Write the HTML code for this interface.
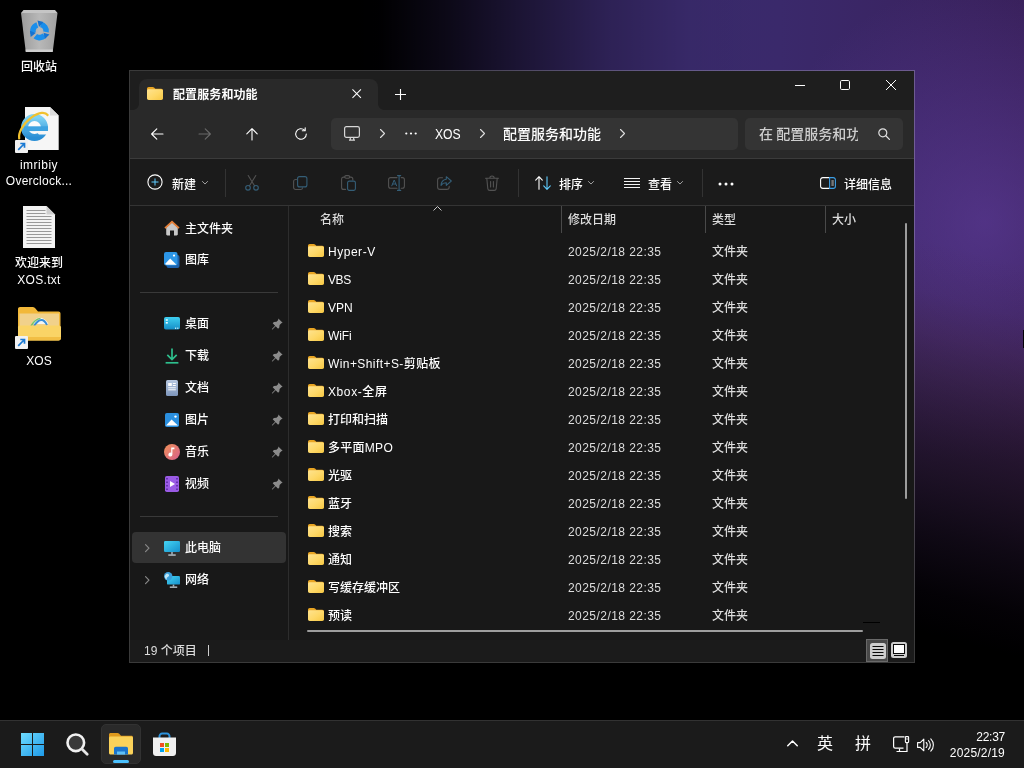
<!DOCTYPE html>
<html lang="zh-CN">
<head>
<meta charset="utf-8">
<title>配置服务和功能</title>
<style>
*{box-sizing:border-box;margin:0;padding:0}
html,body{width:1024px;height:768px;overflow:hidden;background:#000}
body{font-family:"Liberation Sans","Noto Sans CJK SC",sans-serif;font-size:12px;color:#fff;position:relative}
div,svg,span{position:absolute}
svg{overflow:visible}
#root{left:0;top:0;width:1024px;height:768px;will-change:transform;opacity:.999}
#wall{left:0;top:0;width:1024px;height:720px;background:#000;overflow:hidden}
#wall .g1{left:0;top:0;width:1024px;height:720px;
 background:
  linear-gradient(to right, #000 0px, #000 340px, rgba(0,0,0,.975) 380px, rgba(0,0,0,.77) 450px, rgba(0,0,0,.51) 520px, rgba(0,0,0,.2) 610px, rgba(0,0,0,.03) 690px, rgba(0,0,0,0) 760px),
  linear-gradient(195deg, rgba(60,30,40,0) 0%, rgba(60,30,40,0) 26.5%, rgba(60,30,40,.08) 31.9%, rgba(55,28,35,.24) 35.9%, rgba(40,22,25,.38) 39.9%, rgba(28,15,18,.50) 44%, rgba(17,10,12,.68) 50%, rgba(8,5,7,.83) 56%, rgba(2,1,2,.95) 62.1%, rgba(0,0,0,1) 67.1%),
  radial-gradient(ellipse 230px 240px at 985px 222px, rgba(104,68,170,.52), rgba(104,68,170,0) 100%),
  linear-gradient(to right, #3a2b6c 0px, #3a2b6c 690px, #3b2a6c 780px, #3b2563 920px, #39215b 1024px);}
.dl{width:90px;text-align:center;font-size:12px;line-height:17px;color:#fff;font-weight:500;text-shadow:0 1px 2px rgba(0,0,0,.9);white-space:nowrap}
#taskbar{left:0;top:720px;width:1024px;height:48px;background:#1c1c1c;border-top:1px solid #333}
#winbg{left:130px;top:71px;width:784px;height:591px;background:#191919}
#winborder{left:129px;top:70px;width:786px;height:593px;border:1px solid rgba(255,255,255,.23)}
#titlebar{left:130px;top:71px;width:784px;height:39px;background:#1f1f1f}
#tab{left:139px;top:79px;width:239px;height:31px;background:#2a2a2a;border-radius:8px 8px 0 0}
#navbar{left:130px;top:110px;width:784px;height:48px;background:#2a2a2a}
#navline{left:130px;top:158px;width:784px;height:1px;background:#3c3c3c}
#toolbar{left:130px;top:159px;width:784px;height:46px;background:#1c1c1c}
#toolline{left:130px;top:205px;width:784px;height:1px;background:#353535}
#addr{left:331px;top:118px;width:407px;height:32px;background:#353535;border-radius:5px}
#search{left:745px;top:118px;width:158px;height:32px;background:#353535;border-radius:5px}
#sideline{left:288px;top:206px;width:1px;height:434px;background:#2e2e2e}
.t{white-space:nowrap;line-height:16px;height:16px;font-size:12px;color:#fff;font-weight:500}
.t14{white-space:nowrap;line-height:20px;height:20px;font-size:14px;color:#fff;font-weight:500}
.g{color:#dedede}
.sep{width:1px;background:#343434}
</style>
</head>
<body>
<div id="root">
<div id="wall"><div class="g1"></div><div style="left:1023px;top:330px;width:1px;height:18px;background:#050008"></div></div>
<div id="winbg"></div>
<div id="titlebar"></div>
<div id="tab"></div>
<div style="left:133px;top:104px;width:6px;height:6px;background:radial-gradient(circle at 0 0, rgba(42,42,42,0) 5.500px, #2a2a2a 6.200px)"></div>
<div style="left:378px;top:104px;width:6px;height:6px;background:radial-gradient(circle at 100% 0, rgba(42,42,42,0) 5.500px, #2a2a2a 6.200px)"></div>
<div id="navbar"></div>
<div id="navline"></div>
<div id="addr"></div>
<div id="search"></div>
<div id="toolbar"></div>
<div id="toolline"></div>
<div id="sideline"></div>
<div style="left:130px;top:640px;width:784px;height:22px;background:#1c1c1c"></div>
<svg style="left:0;top:0" width="0" height="0"><defs><linearGradient id="fg" x1="0" y1="0" x2="1" y2="1"><stop offset="0" stop-color="#ffe491"/><stop offset=".55" stop-color="#ffd968"/><stop offset="1" stop-color="#f7c845"/></linearGradient></defs></svg>
<svg style="left:147px;top:87px" width="16" height="13" viewBox="0 0 17 14" preserveAspectRatio="none"><path d="M1.800 0h4.200c.6 0 1.100.2 1.500.6l1.300 1.400h6.400c1 0 1.800.8 1.800 1.800v1.600H0V1.800C0 .8.800 0 1.800 0z" fill="#eaa624"/><path d="M0 4c0-.9.700-1.600 1.600-1.600h13.600c1 0 1.800.8 1.800 1.800v8c0 1-.8 1.800-1.800 1.800H1.800c-1 0-1.800-.8-1.800-1.800z" fill="url(#fg)"/></svg>
<div class="t" style="left:173px;top:87px;font-weight:bold;letter-spacing:0.1px">配置服务和功能</div>
<svg style="left:352px;top:89px" width="9.400" height="9.400" viewBox="0 0 10 10"><path d="M.5.5l9 9M9.500 .5l-9 9" stroke="#fff" stroke-width="1.1" fill="none"/></svg>
<svg style="left:395px;top:89px" width="11" height="11" viewBox="0 0 11 11"><path d="M5.500 0v11M0 5.500h11" stroke="#fff" stroke-width="1.1" fill="none"/></svg>
<svg style="left:795px;top:85px" width="10" height="1" viewBox="0 0 10 1"><rect width="10" height="1" fill="#fff"/></svg>
<svg style="left:840px;top:80px" width="10" height="10" viewBox="0 0 10 10"><rect x=".5" y=".5" width="9" height="9" rx="1.2" stroke="#fff" stroke-width="1" fill="none"/></svg>
<svg style="left:886px;top:80px" width="10" height="10" viewBox="0 0 10 10"><path d="M0 0l10 10M10 0L0 10" stroke="#fff" stroke-width="1" fill="none"/></svg>
<svg style="left:151px;top:128px" width="12" height="12" viewBox="0 0 12 12"><path d="M12 6H.8M5.800 .8L.6 6l5.200 5.200" stroke="#fff" stroke-width="1.1" fill="none" stroke-linecap="round" stroke-linejoin="round"/></svg>
<svg style="left:199px;top:128px" width="12" height="12" viewBox="0 0 12 12"><path d="M0 6h11.200M6.200 .8L11.400 6l-5.200 5.200" stroke="#6a6a6a" stroke-width="1.1" fill="none" stroke-linecap="round" stroke-linejoin="round"/></svg>
<svg style="left:246px;top:128px" width="12" height="12" viewBox="0 0 12 12"><path d="M6 12V.8M.8 5.800L6 .6l5.200 5.200" stroke="#fff" stroke-width="1.1" fill="none" stroke-linecap="round" stroke-linejoin="round"/></svg>
<svg style="left:294px;top:127px" width="14" height="14" viewBox="0 0 14 14"><path d="M12.300 7a5.300 5.300 0 1 1-1.700-3.900" stroke="#fff" stroke-width="1.1" fill="none" stroke-linecap="round"/><path d="M11.200 .8v2.900H8.300" stroke="#fff" stroke-width="1.1" fill="none" stroke-linecap="round" stroke-linejoin="round"/></svg>
<svg style="left:344px;top:126px" width="16" height="15" viewBox="0 0 16 15"><rect x=".6" y=".6" width="14.800" height="10.800" rx="1.800" stroke="#d8d8d8" stroke-width="1.200" fill="none"/><path d="M5 14.200h6M6.300 11.600v2.400M9.700 11.600v2.400" stroke="#d8d8d8" stroke-width="1.200" fill="none"/></svg>
<svg style="left:380px;top:129px" width="5" height="9" viewBox="0 0 5 9"><path d="M.5.5l4 4-4 4" stroke="#e0e0e0" stroke-width="1.100" fill="none" stroke-linecap="round" stroke-linejoin="round"/></svg>
<svg style="left:405px;top:132px" width="12" height="3" viewBox="0 0 12 3"><circle cx="1.300" cy="1.500" r="1.100" fill="#fff"/><circle cx="6" cy="1.500" r="1.100" fill="#fff"/><circle cx="10.700" cy="1.500" r="1.100" fill="#fff"/></svg>
<div class="t14" style="left:435px;top:124px;transform:scaleX(.87);transform-origin:0 0">XOS</div>
<svg style="left:480px;top:129px" width="5" height="9" viewBox="0 0 5 9"><path d="M.5.5l4 4-4 4" stroke="#e0e0e0" stroke-width="1.100" fill="none" stroke-linecap="round" stroke-linejoin="round"/></svg>
<div class="t14" style="left:503px;top:124px">配置服务和功能</div>
<svg style="left:620px;top:129px" width="5" height="9" viewBox="0 0 5 9"><path d="M.5.5l4 4-4 4" stroke="#e0e0e0" stroke-width="1.100" fill="none" stroke-linecap="round" stroke-linejoin="round"/></svg>
<div class="t14" style="left:759px;top:124px;color:#cfcfcf;width:98.500px;overflow:hidden;word-spacing:-.600px">在 配置服务和功能 中搜索</div>
<svg style="left:878px;top:128px" width="12" height="12" viewBox="0 0 12 12"><circle cx="4.800" cy="4.800" r="4" stroke="#e0e0e0" stroke-width="1.200" fill="none"/><path d="M7.800 7.800l3.600 3.600" stroke="#e0e0e0" stroke-width="1.300" stroke-linecap="round"/></svg>
<svg style="left:147px;top:174px" width="16" height="16" viewBox="0 0 16 16"><circle cx="8" cy="8" r="7.100" stroke="#fff" stroke-width="1.100" fill="none"/><path d="M8 4.500v7M4.500 8h7" stroke="#60cdff" stroke-width="1"/></svg>
<div class="t" style="left:172px;top:177px">新建</div>
<svg style="left:202px;top:181px" width="6" height="3.500" viewBox="0 0 7 4"><path d="M.5.5l3 3 3-3" stroke="#aaaaaa" stroke-width="1.100" fill="none" stroke-linecap="round" stroke-linejoin="round"/></svg>
<div class="sep" style="left:225px;top:169px;height:28px"></div>
<svg style="left:245px;top:175px" width="14" height="16" viewBox="0 0 14 16"><path d="M3.200 .5l6.300 10.300M10.800 .5L4.500 10.800" stroke="#535353" stroke-width="1.100" fill="none" stroke-linecap="round"/><circle cx="3" cy="12.800" r="2.300" stroke="#355f78" stroke-width="1.100" fill="none"/><circle cx="11" cy="12.800" r="2.300" stroke="#355f78" stroke-width="1.100" fill="none"/></svg>
<svg style="left:293px;top:176px" width="15" height="15" viewBox="0 0 15 15"><path d="M3.500 3.500H2.600A2 2 0 0 0 .6 5.500v6a2 2 0 0 0 2 2h5a2 2 0 0 0 2-1.800" stroke="#535353" stroke-width="1.100" fill="none" stroke-linecap="round"/><rect x="4.600" y=".6" width="9.300" height="10.300" rx="2" stroke="#355f78" stroke-width="1.100" fill="none"/></svg>
<svg style="left:341px;top:175px" width="15" height="16" viewBox="0 0 15 16"><path d="M4.500 14.400H2.600a2 2 0 0 1-2-2V4.100a2 2 0 0 1 2-2h1.200M8.600 2.100h1.200a2 2 0 0 1 2 2V5" stroke="#535353" stroke-width="1.100" fill="none" stroke-linecap="round"/><rect x="3.800" y=".6" width="4.800" height="2.600" rx="1.200" stroke="#535353" stroke-width="1.100" fill="none"/><rect x="6.600" y="6.100" width="7.800" height="9.300" rx="1.600" stroke="#355f78" stroke-width="1.100" fill="none"/></svg>
<svg style="left:388px;top:175px" width="17" height="16" viewBox="0 0 17 16"><path d="M9 2.600H2.600a2 2 0 0 0-2 2v6.600a2 2 0 0 0 2 2H9M13.200 2.600h1.200a2 2 0 0 1 2 2v6.600a2 2 0 0 1-2 2h-1.200" stroke="#535353" stroke-width="1.100" fill="none" stroke-linecap="round"/><path d="M3.800 10.800l2.400-5.800 2.400 5.800M4.600 9h3.200" stroke="#355f78" stroke-width="1" fill="none" stroke-linecap="round" stroke-linejoin="round"/><path d="M11.100 .6v14.800M9.500 .6h3.200M9.500 15.400h3.200" stroke="#355f78" stroke-width="1.100" fill="none" stroke-linecap="round"/></svg>
<svg style="left:437px;top:176px" width="15" height="14" viewBox="0 0 15 14"><path d="M5.500 1.800H3a2.400 2.400 0 0 0-2.400 2.400v6.800A2.400 2.400 0 0 0 3 13.400h6.800a2.400 2.400 0 0 0 2.400-2.400v-.8" stroke="#535353" stroke-width="1.100" fill="none" stroke-linecap="round"/><path d="M9.300 .7l5 4.300-5 4.300V6.800C6.800 6.700 5.300 7.500 4 9.400c.2-3.200 2-5.700 5.300-6.200z" stroke="#355f78" stroke-width="1.100" fill="none" stroke-linejoin="round"/></svg>
<svg style="left:485px;top:175px" width="14" height="16" viewBox="0 0 14 16"><path d="M.5 3.200h13M4.800 3.200a2.200 2.200 0 0 1 4.400 0M1.800 3.400l1 10.200a2 2 0 0 0 2 1.800h4.400a2 2 0 0 0 2-1.800l1-10.200M5.600 6.500v5.500M8.400 6.500v5.500" stroke="#535353" stroke-width="1.100" fill="none" stroke-linecap="round"/></svg>
<div class="sep" style="left:518px;top:169px;height:28px"></div>
<svg style="left:535px;top:176px" width="16" height="14" viewBox="0 0 16 14"><path d="M4 13.300V.9M.7 4.100L4 .7l3.300 3.400" stroke="#fff" stroke-width="1.100" fill="none" stroke-linecap="round" stroke-linejoin="round"/><path d="M12 .7v12.400M8.700 9.900L12 13.300l3.300-3.400" stroke="#60cdff" stroke-width="1.100" fill="none" stroke-linecap="round" stroke-linejoin="round"/></svg>
<div class="t" style="left:559px;top:177px">排序</div>
<svg style="left:588px;top:181px" width="6" height="3.500" viewBox="0 0 7 4"><path d="M.5.5l3 3 3-3" stroke="#aaaaaa" stroke-width="1.100" fill="none" stroke-linecap="round" stroke-linejoin="round"/></svg>
<svg style="left:624px;top:178px" width="16" height="11" viewBox="0 0 16 11"><path d="M0 0h16v1H0zM0 3h16v1H0zM0 6h16v1H0zM0 9h16v1H0z" fill="#f4f4f4"/></svg>
<div class="t" style="left:648px;top:177px">查看</div>
<svg style="left:677px;top:181px" width="6" height="3.500" viewBox="0 0 7 4"><path d="M.5.5l3 3 3-3" stroke="#aaaaaa" stroke-width="1.100" fill="none" stroke-linecap="round" stroke-linejoin="round"/></svg>
<div class="sep" style="left:702px;top:169px;height:28px"></div>
<svg style="left:718px;top:182px" width="16" height="4" viewBox="0 0 16 4"><circle cx="2" cy="2" r="1.500" fill="#fff"/><circle cx="8" cy="2" r="1.500" fill="#fff"/><circle cx="14" cy="2" r="1.500" fill="#fff"/></svg>
<svg style="left:820px;top:177px" width="16" height="12" viewBox="0 0 16 12"><path d="M9.600 .6H2.800A2.200 2.200 0 0 0 .6 2.800v6.400a2.200 2.200 0 0 0 2.200 2.200h6.800" stroke="#fff" stroke-width="1.100" fill="none"/><path d="M9.600 .6h3.600a2.200 2.200 0 0 1 2.200 2.200v6.400a2.200 2.200 0 0 1-2.200 2.200H9.600z" stroke="#3d9fe6" stroke-width="1.100" fill="none"/><path d="M11.400 4h2.400M11.400 6h2.400M11.400 8h2.400" stroke="#e8e8e8" stroke-width=".9"/></svg>
<div class="t" style="left:844px;top:177px">详细信息</div>
<div class="t g" style="left:320px;top:212px">名称</div>
<svg style="left:433px;top:206px" width="9" height="5" viewBox="0 0 9 5"><path d="M.5 4.500l4-4 4 4" stroke="#c8c8c8" stroke-width="1" fill="none"/></svg>
<div class="sep" style="left:561px;top:206px;height:27px;background:#4a4a4a"></div>
<div class="t g" style="left:568px;top:212px">修改日期</div>
<div class="sep" style="left:705px;top:206px;height:27px;background:#4a4a4a"></div>
<div class="t g" style="left:712px;top:212px">类型</div>
<div class="sep" style="left:825px;top:206px;height:27px;background:#4a4a4a"></div>
<div class="t g" style="left:832px;top:212px">大小</div>
<div style="left:905px;top:223px;width:2px;height:276px;background:#9d9d9d;border-radius:1px"></div>
<div style="left:307px;top:630px;width:556px;height:2px;background:#9d9d9d;border-radius:1px"></div>
<div style="left:863px;top:622px;width:17px;height:1px;background:#000"></div>
<svg style="left:308px;top:244px" width="16" height="13" viewBox="0 0 17 14" preserveAspectRatio="none"><path d="M1.800 0h4.200c.6 0 1.100.2 1.500.6l1.300 1.400h6.400c1 0 1.800.8 1.800 1.800v1.600H0V1.800C0 .8.800 0 1.800 0z" fill="#eaa624"/><path d="M0 4c0-.9.700-1.600 1.600-1.600h13.600c1 0 1.800.8 1.800 1.800v8c0 1-.8 1.800-1.800 1.800H1.800c-1 0-1.800-.8-1.800-1.800z" fill="url(#fg)"/></svg>
<div class="t" style="left:328px;top:244px;letter-spacing:0.526px">Hyper-V</div>
<div class="t g" style="left:568px;top:244px;letter-spacing:0.45px">2025/2/18 22:35</div>
<div class="t g" style="left:712px;top:244px">文件夹</div>
<svg style="left:308px;top:272px" width="16" height="13" viewBox="0 0 17 14" preserveAspectRatio="none"><path d="M1.800 0h4.200c.6 0 1.100.2 1.500.6l1.300 1.400h6.400c1 0 1.800.8 1.800 1.800v1.600H0V1.800C0 .8.800 0 1.800 0z" fill="#eaa624"/><path d="M0 4c0-.9.700-1.600 1.600-1.600h13.600c1 0 1.800.8 1.800 1.800v8c0 1-.8 1.800-1.800 1.800H1.800c-1 0-1.800-.8-1.800-1.800z" fill="url(#fg)"/></svg>
<div class="t" style="left:328px;top:272px;letter-spacing:-0.439px">VBS</div>
<div class="t g" style="left:568px;top:272px;letter-spacing:0.45px">2025/2/18 22:35</div>
<div class="t g" style="left:712px;top:272px">文件夹</div>
<svg style="left:308px;top:300px" width="16" height="13" viewBox="0 0 17 14" preserveAspectRatio="none"><path d="M1.800 0h4.200c.6 0 1.100.2 1.500.6l1.300 1.400h6.400c1 0 1.800.8 1.800 1.800v1.600H0V1.800C0 .8.800 0 1.800 0z" fill="#eaa624"/><path d="M0 4c0-.9.700-1.600 1.600-1.600h13.600c1 0 1.800.8 1.800 1.800v8c0 1-.8 1.800-1.800 1.800H1.800c-1 0-1.800-.8-1.800-1.800z" fill="url(#fg)"/></svg>
<div class="t" style="left:328px;top:300px;letter-spacing:-0.062px">VPN</div>
<div class="t g" style="left:568px;top:300px;letter-spacing:0.45px">2025/2/18 22:35</div>
<div class="t g" style="left:712px;top:300px">文件夹</div>
<svg style="left:308px;top:328px" width="16" height="13" viewBox="0 0 17 14" preserveAspectRatio="none"><path d="M1.800 0h4.200c.6 0 1.100.2 1.500.6l1.300 1.400h6.400c1 0 1.800.8 1.800 1.800v1.600H0V1.800C0 .8.800 0 1.800 0z" fill="#eaa624"/><path d="M0 4c0-.9.700-1.600 1.600-1.600h13.600c1 0 1.800.8 1.800 1.800v8c0 1-.8 1.800-1.800 1.800H1.800c-1 0-1.800-.8-1.800-1.800z" fill="url(#fg)"/></svg>
<div class="t" style="left:328px;top:328px;letter-spacing:-0.125px">WiFi</div>
<div class="t g" style="left:568px;top:328px;letter-spacing:0.45px">2025/2/18 22:35</div>
<div class="t g" style="left:712px;top:328px">文件夹</div>
<svg style="left:308px;top:356px" width="16" height="13" viewBox="0 0 17 14" preserveAspectRatio="none"><path d="M1.800 0h4.200c.6 0 1.100.2 1.500.6l1.300 1.400h6.400c1 0 1.800.8 1.800 1.800v1.600H0V1.800C0 .8.800 0 1.800 0z" fill="#eaa624"/><path d="M0 4c0-.9.700-1.600 1.600-1.600h13.600c1 0 1.800.8 1.800 1.800v8c0 1-.8 1.800-1.800 1.800H1.800c-1 0-1.800-.8-1.800-1.800z" fill="url(#fg)"/></svg>
<div class="t" style="left:328px;top:356px;letter-spacing:0.42px">Win+Shift+S-剪贴板</div>
<div class="t g" style="left:568px;top:356px;letter-spacing:0.45px">2025/2/18 22:35</div>
<div class="t g" style="left:712px;top:356px">文件夹</div>
<svg style="left:308px;top:384px" width="16" height="13" viewBox="0 0 17 14" preserveAspectRatio="none"><path d="M1.800 0h4.200c.6 0 1.100.2 1.500.6l1.300 1.400h6.400c1 0 1.800.8 1.800 1.800v1.600H0V1.800C0 .8.800 0 1.800 0z" fill="#eaa624"/><path d="M0 4c0-.9.700-1.600 1.600-1.600h13.600c1 0 1.800.8 1.800 1.800v8c0 1-.8 1.800-1.800 1.800H1.800c-1 0-1.800-.8-1.800-1.800z" fill="url(#fg)"/></svg>
<div class="t" style="left:328px;top:384px;letter-spacing:0.592px">Xbox-全屏</div>
<div class="t g" style="left:568px;top:384px;letter-spacing:0.45px">2025/2/18 22:35</div>
<div class="t g" style="left:712px;top:384px">文件夹</div>
<svg style="left:308px;top:412px" width="16" height="13" viewBox="0 0 17 14" preserveAspectRatio="none"><path d="M1.800 0h4.200c.6 0 1.100.2 1.500.6l1.300 1.400h6.400c1 0 1.800.8 1.800 1.800v1.600H0V1.800C0 .8.800 0 1.800 0z" fill="#eaa624"/><path d="M0 4c0-.9.700-1.600 1.600-1.600h13.600c1 0 1.800.8 1.800 1.800v8c0 1-.8 1.800-1.800 1.800H1.800c-1 0-1.800-.8-1.800-1.800z" fill="url(#fg)"/></svg>
<div class="t" style="left:328px;top:412px">打印和扫描</div>
<div class="t g" style="left:568px;top:412px;letter-spacing:0.45px">2025/2/18 22:35</div>
<div class="t g" style="left:712px;top:412px">文件夹</div>
<svg style="left:308px;top:440px" width="16" height="13" viewBox="0 0 17 14" preserveAspectRatio="none"><path d="M1.800 0h4.200c.6 0 1.100.2 1.500.6l1.300 1.400h6.400c1 0 1.800.8 1.800 1.800v1.600H0V1.800C0 .8.800 0 1.800 0z" fill="#eaa624"/><path d="M0 4c0-.9.700-1.600 1.600-1.600h13.600c1 0 1.800.8 1.800 1.800v8c0 1-.8 1.800-1.800 1.800H1.800c-1 0-1.800-.8-1.800-1.800z" fill="url(#fg)"/></svg>
<div class="t" style="left:328px;top:440px;letter-spacing:0.276px">多平面MPO</div>
<div class="t g" style="left:568px;top:440px;letter-spacing:0.45px">2025/2/18 22:35</div>
<div class="t g" style="left:712px;top:440px">文件夹</div>
<svg style="left:308px;top:468px" width="16" height="13" viewBox="0 0 17 14" preserveAspectRatio="none"><path d="M1.800 0h4.200c.6 0 1.100.2 1.500.6l1.300 1.400h6.400c1 0 1.800.8 1.800 1.800v1.600H0V1.800C0 .8.800 0 1.800 0z" fill="#eaa624"/><path d="M0 4c0-.9.700-1.600 1.600-1.600h13.600c1 0 1.800.8 1.800 1.800v8c0 1-.8 1.800-1.800 1.800H1.800c-1 0-1.800-.8-1.800-1.800z" fill="url(#fg)"/></svg>
<div class="t" style="left:328px;top:468px">光驱</div>
<div class="t g" style="left:568px;top:468px;letter-spacing:0.45px">2025/2/18 22:35</div>
<div class="t g" style="left:712px;top:468px">文件夹</div>
<svg style="left:308px;top:496px" width="16" height="13" viewBox="0 0 17 14" preserveAspectRatio="none"><path d="M1.800 0h4.200c.6 0 1.100.2 1.500.6l1.300 1.400h6.400c1 0 1.800.8 1.800 1.800v1.600H0V1.800C0 .8.800 0 1.800 0z" fill="#eaa624"/><path d="M0 4c0-.9.700-1.600 1.600-1.600h13.600c1 0 1.800.8 1.800 1.800v8c0 1-.8 1.800-1.800 1.800H1.800c-1 0-1.800-.8-1.800-1.800z" fill="url(#fg)"/></svg>
<div class="t" style="left:328px;top:496px">蓝牙</div>
<div class="t g" style="left:568px;top:496px;letter-spacing:0.45px">2025/2/18 22:35</div>
<div class="t g" style="left:712px;top:496px">文件夹</div>
<svg style="left:308px;top:524px" width="16" height="13" viewBox="0 0 17 14" preserveAspectRatio="none"><path d="M1.800 0h4.200c.6 0 1.100.2 1.500.6l1.300 1.400h6.400c1 0 1.800.8 1.800 1.800v1.600H0V1.800C0 .8.800 0 1.800 0z" fill="#eaa624"/><path d="M0 4c0-.9.700-1.600 1.600-1.600h13.600c1 0 1.800.8 1.800 1.800v8c0 1-.8 1.800-1.800 1.800H1.800c-1 0-1.800-.8-1.800-1.800z" fill="url(#fg)"/></svg>
<div class="t" style="left:328px;top:524px">搜索</div>
<div class="t g" style="left:568px;top:524px;letter-spacing:0.45px">2025/2/18 22:35</div>
<div class="t g" style="left:712px;top:524px">文件夹</div>
<svg style="left:308px;top:552px" width="16" height="13" viewBox="0 0 17 14" preserveAspectRatio="none"><path d="M1.800 0h4.200c.6 0 1.100.2 1.500.6l1.300 1.400h6.400c1 0 1.800.8 1.800 1.800v1.600H0V1.800C0 .8.800 0 1.800 0z" fill="#eaa624"/><path d="M0 4c0-.9.700-1.600 1.600-1.600h13.600c1 0 1.800.8 1.800 1.800v8c0 1-.8 1.800-1.800 1.800H1.800c-1 0-1.800-.8-1.800-1.800z" fill="url(#fg)"/></svg>
<div class="t" style="left:328px;top:552px">通知</div>
<div class="t g" style="left:568px;top:552px;letter-spacing:0.45px">2025/2/18 22:35</div>
<div class="t g" style="left:712px;top:552px">文件夹</div>
<svg style="left:308px;top:580px" width="16" height="13" viewBox="0 0 17 14" preserveAspectRatio="none"><path d="M1.800 0h4.200c.6 0 1.100.2 1.500.6l1.300 1.400h6.400c1 0 1.800.8 1.800 1.800v1.600H0V1.800C0 .8.800 0 1.800 0z" fill="#eaa624"/><path d="M0 4c0-.9.700-1.600 1.600-1.600h13.600c1 0 1.800.8 1.800 1.800v8c0 1-.8 1.800-1.800 1.800H1.800c-1 0-1.800-.8-1.800-1.800z" fill="url(#fg)"/></svg>
<div class="t" style="left:328px;top:580px">写缓存缓冲区</div>
<div class="t g" style="left:568px;top:580px;letter-spacing:0.45px">2025/2/18 22:35</div>
<div class="t g" style="left:712px;top:580px">文件夹</div>
<svg style="left:308px;top:608px" width="16" height="13" viewBox="0 0 17 14" preserveAspectRatio="none"><path d="M1.800 0h4.200c.6 0 1.100.2 1.500.6l1.300 1.400h6.400c1 0 1.800.8 1.800 1.800v1.600H0V1.800C0 .8.800 0 1.800 0z" fill="#eaa624"/><path d="M0 4c0-.9.700-1.600 1.600-1.600h13.600c1 0 1.800.8 1.800 1.800v8c0 1-.8 1.800-1.800 1.800H1.800c-1 0-1.800-.8-1.800-1.800z" fill="url(#fg)"/></svg>
<div class="t" style="left:328px;top:608px">预读</div>
<div class="t g" style="left:568px;top:608px;letter-spacing:0.45px">2025/2/18 22:35</div>
<div class="t g" style="left:712px;top:608px">文件夹</div>
<div class="t g" style="left:144px;top:643px">19 个项目</div>
<div style="left:208px;top:645px;width:1px;height:11px;background:#d0d0d0"></div>
<div style="left:866px;top:639px;width:22px;height:23px;background:#4a4a4a;border:1px solid #6a6a6a"></div>
<svg style="left:870px;top:643px" width="16" height="16" viewBox="0 0 16 16"><rect width="16" height="16" rx="2.500" fill="#cfcfcf"/><path d="M2.500 3h11v1h-11zM2.500 6h11v1h-11zM2.500 9h11v1h-11zM2.500 12h11v1h-11z" fill="#0a0a0a"/></svg>
<svg style="left:891px;top:642px" width="16" height="16" viewBox="0 0 16 16"><rect width="16" height="16" rx="2.500" fill="#cfcfcf"/><rect x="2" y="2" width="12" height="10" fill="#0a0a0a"/><rect x="3" y="3" width="10" height="8" fill="#fff"/><rect x="3" y="13" width="10" height="1" fill="#0a0a0a"/></svg>
<div style="left:132px;top:532px;width:154px;height:31px;background:#343434;border-radius:4px"></div>
<div style="left:140px;top:292px;width:138px;height:1px;background:#3a3a3a"></div>
<div style="left:140px;top:516px;width:138px;height:1px;background:#3a3a3a"></div>
<svg style="left:164px;top:220px" width="16" height="16" viewBox="0 0 16 16"><path d="M2.200 7.500V14.200c0 .7.500 1.200 1.200 1.200H6V10.500h4v4.900h2.600c.7 0 1.200-.5 1.200-1.200V7.500L8 2.600z" fill="#c9c9c9"/><path d="M8 .6L.4 7.400l1.200 1.300L8 3l6.400 5.700 1.200-1.300z" fill="#e8823a"/></svg>
<div class="t" style="left:185px;top:221px">主文件夹</div>
<svg style="left:164px;top:252px" width="16" height="16" viewBox="0 0 16 16"><rect x="2.500" y="3" width="13" height="13" rx="2" fill="#1c62ad"/><rect x="0" y="0" width="13.500" height="13.500" rx="2" fill="#2d97e8"/><path d="M1 12l5.200-5.400L12.500 12.800H2.200z" fill="#fff"/><circle cx="10" cy="3.600" r="1.100" fill="#fff"/></svg>
<div class="t" style="left:185px;top:252px">图库</div>
<svg style="left:164px;top:317px" width="16" height="13" viewBox="0 0 16 13"><defs><linearGradient id="dk" x1="0" y1="0" x2="0" y2="1"><stop offset="0" stop-color="#3fd0f2"/><stop offset="1" stop-color="#178fc8"/></linearGradient></defs><rect width="16" height="12.600" rx="1.800" fill="url(#dk)"/><rect x="1.800" y="2.200" width="2" height="1.600" fill="#e8faff"/><rect x="1.800" y="5" width="2" height="1.600" fill="#e8faff"/><rect x="11" y="10.600" width="1.200" height="1.200" fill="#e8faff"/><rect x="13.200" y="10.600" width="1.200" height="1.200" fill="#e8faff"/></svg>
<div class="t" style="left:185px;top:316px">桌面</div>
<svg style="left:272px;top:318px" width="11" height="11" viewBox="0 0 11 11"><path d="M6.300 .4l4.300 4.300-1.300 .5-1.700 1.700-.3 2.600-1.200 1.200-2.400-2.400-3.200 3.200-.5-.1-.1-.5 3.200-3.200L.7 5.300l1.200-1.200 2.600-.3 1.700-1.700z" fill="#8c8c8c"/></svg>
<svg style="left:165px;top:348px" width="14" height="16" viewBox="0 0 14 16"><path d="M7 .5v10.800M2.300 6.800L7 11.500l4.700-4.700" stroke="#2fc08e" stroke-width="1.700" fill="none"/><path d="M.6 14.800h12.800" stroke="#2fc08e" stroke-width="1.700"/></svg>
<div class="t" style="left:185px;top:348px">下载</div>
<svg style="left:272px;top:350px" width="11" height="11" viewBox="0 0 11 11"><path d="M6.300 .4l4.300 4.300-1.300 .5-1.700 1.700-.3 2.600-1.200 1.200-2.400-2.400-3.200 3.200-.5-.1-.1-.5 3.200-3.200L.7 5.300l1.200-1.200 2.600-.3 1.700-1.700z" fill="#8c8c8c"/></svg>
<svg style="left:166px;top:380px" width="12" height="16" viewBox="0 0 12 16"><defs><linearGradient id="dc" x1="0" y1="0" x2="0" y2="1"><stop offset="0" stop-color="#b9c9e2"/><stop offset="1" stop-color="#7f97bd"/></linearGradient></defs><rect width="12" height="16" rx="1.600" fill="url(#dc)"/><rect x="2.200" y="3" width="3.600" height="3" fill="#fff"/><path d="M6.800 3.500h3M6.800 5.500h3M2.200 7.800h7.600M2.200 9.800h7.600" stroke="#fff" stroke-width="1"/></svg>
<div class="t" style="left:185px;top:380px">文档</div>
<svg style="left:272px;top:382px" width="11" height="11" viewBox="0 0 11 11"><path d="M6.300 .4l4.300 4.300-1.300 .5-1.700 1.700-.3 2.600-1.200 1.200-2.400-2.400-3.200 3.200-.5-.1-.1-.5 3.200-3.200L.7 5.300l1.200-1.200 2.600-.3 1.700-1.700z" fill="#8c8c8c"/></svg>
<svg style="left:165px;top:413px" width="14" height="14" viewBox="0 0 14 14"><rect width="14" height="14" rx="1.800" fill="#2b90e0"/><path d="M1 12.600l5.600-6L13 12.600z" fill="#fff"/><circle cx="10.500" cy="3.600" r="1.200" fill="#fff"/></svg>
<div class="t" style="left:185px;top:412px">图片</div>
<svg style="left:272px;top:414px" width="11" height="11" viewBox="0 0 11 11"><path d="M6.300 .4l4.300 4.300-1.300 .5-1.700 1.700-.3 2.600-1.200 1.200-2.400-2.400-3.200 3.200-.5-.1-.1-.5 3.200-3.200L.7 5.300l1.200-1.200 2.600-.3 1.700-1.700z" fill="#8c8c8c"/></svg>
<svg style="left:164px;top:444px" width="16" height="16" viewBox="0 0 16 16"><defs><linearGradient id="mu" x1="0" y1="0" x2="1" y2="1"><stop offset="0" stop-color="#f0935a"/><stop offset="1" stop-color="#d95f8c"/></linearGradient></defs><circle cx="8" cy="8" r="8" fill="url(#mu)"/><path d="M7.200 3.500h3.200v1.800H8.400v5.200a2 2 0 1 1-1.200-1.800z" fill="#fff"/></svg>
<div class="t" style="left:185px;top:444px">音乐</div>
<svg style="left:272px;top:446px" width="11" height="11" viewBox="0 0 11 11"><path d="M6.300 .4l4.300 4.300-1.300 .5-1.700 1.700-.3 2.600-1.200 1.200-2.400-2.400-3.200 3.200-.5-.1-.1-.5 3.200-3.200L.7 5.300l1.200-1.200 2.600-.3 1.700-1.700z" fill="#8c8c8c"/></svg>
<svg style="left:165px;top:476px" width="14" height="16" viewBox="0 0 14 16"><rect width="14" height="16" rx="1.800" fill="#9b5ce6"/><path d="M5 5l5 3-5 3z" fill="#fff"/><path d="M1.200 2h1.600v1.600H1.200zM1.200 5.500h1.600v1.600H1.200zM1.200 9h1.600v1.600H1.200zM1.200 12.500h1.600v1.600H1.200zM11.200 2h1.600v1.600h-1.600zM11.200 5.500h1.600v1.600h-1.600zM11.200 9h1.600v1.600h-1.600zM11.200 12.500h1.600v1.600h-1.600z" fill="#5a2aa6"/></svg>
<div class="t" style="left:185px;top:476px">视频</div>
<svg style="left:272px;top:478px" width="11" height="11" viewBox="0 0 11 11"><path d="M6.300 .4l4.300 4.300-1.300 .5-1.700 1.700-.3 2.600-1.200 1.200-2.400-2.400-3.200 3.200-.5-.1-.1-.5 3.200-3.200L.7 5.300l1.200-1.200 2.600-.3 1.700-1.700z" fill="#8c8c8c"/></svg>
<svg style="left:145px;top:544px" width="4.500" height="8.200" viewBox="0 0 5 9"><path d="M.6.600l3.800 3.900-3.800 3.900" stroke="#8a8a8a" stroke-width="1.300" fill="none" stroke-linecap="round" stroke-linejoin="round"/></svg>
<svg style="left:164px;top:541px" width="16" height="15" viewBox="0 0 16 15"><defs><linearGradient id="pc" x1="0" y1="0" x2="1" y2="1"><stop offset="0" stop-color="#46d6f5"/><stop offset="1" stop-color="#1690cc"/></linearGradient></defs><rect width="16" height="11" rx="1.300" fill="url(#pc)"/><path d="M7.200 11h1.600v2.600H7.200z" fill="#9fb0bd"/><path d="M4.300 13.400h7.400v1.300H4.300z" fill="#c5d2db"/></svg>
<div class="t" style="left:185px;top:540px">此电脑</div>
<svg style="left:145px;top:576px" width="4.500" height="8.200" viewBox="0 0 5 9"><path d="M.6.600l3.800 3.900-3.800 3.900" stroke="#8a8a8a" stroke-width="1.300" fill="none" stroke-linecap="round" stroke-linejoin="round"/></svg>
<svg style="left:164px;top:572px" width="16" height="16" viewBox="0 0 16 16"><rect x="3" y="4" width="13" height="8.600" rx="1.200" fill="url(#pc)"/><path d="M8.700 12.600h1.600v2H8.700z" fill="#9fb0bd"/><path d="M5.800 14.500h7.400v1.300H5.800z" fill="#c5d2db"/><circle cx="4.200" cy="4.200" r="4.200" fill="#3ba0dc"/><path d="M2 2.200c1.200-.8 2.600-.3 3 .8s-.6 1.800-1.600 2.200S2.600 7 3.400 7.800C1.600 7.400.4 5.600.8 3.800z" fill="#bfe6f7"/></svg>
<div class="t" style="left:185px;top:572px">网络</div>
<svg style="left:21px;top:10px" width="37" height="42" viewBox="0 0 37 42"><defs><linearGradient id="rb" x1="0" y1="0" x2="1" y2="0"><stop offset="0" stop-color="#9c9c9c"/><stop offset=".5" stop-color="#b9b9b9"/><stop offset="1" stop-color="#a2a2a2"/></linearGradient></defs><path d="M0 3h36.500L31.700 42H4.800z" fill="url(#rb)"/><path d="M2.500 0h31.500l2.500 3H0z" fill="#c6c6c6"/><path d="M4.500 39.500h27.400l-.3 2.500H4.800z" fill="#cfcfcf"/><g transform="translate(18.500 21)"><circle r="6.600" fill="none" stroke="#1b8fec" stroke-width="5.600" stroke-dasharray="10.200 3.620" transform="rotate(-80)"/><path d="M-2-10.500l6 1.500-4.500 5z M10 3.500l-4.500 4.200-1.500-6z M-8.800 6l-.8-6.200 5.800 2.200z" fill="#1673d1"/></g></svg>
<div class="dl" style="left:-6px;top:59px">回收站</div>
<svg style="left:18px;top:107px" width="42" height="43" viewBox="0 0 42 43"><defs><linearGradient id="ie" x1="0" y1="0" x2="0" y2="1"><stop offset="0" stop-color="#7fd3f5"/><stop offset="1" stop-color="#2a8fd6"/></linearGradient></defs><path d="M7 0h25l8.700 8.500V43H7z" fill="#f7f7f7"/><path d="M32 0v8.500h8.700z" fill="#dcdcdc"/><circle cx="16.500" cy="20.500" r="10" fill="#fdfdfd" stroke="url(#ie)" stroke-width="7"/><rect x="6" y="19.300" width="24" height="4.800" fill="#3fa4e2"/><path d="M17 24.100h14v3.400H21z" fill="#f7f7f7"/><path d="M1.200 31.500C.2 26 4.500 17 13 10.800S27.500 5 29.600 8" stroke="#f2c230" stroke-width="2.200" fill="none" stroke-linecap="round"/></svg>
<svg style="left:15px;top:140px" width="13" height="13" viewBox="0 0 13 13"><rect width="13" height="13" rx="1" fill="#f2f2f2"/><path d="M3.200 9.800L9 4M5.300 3.500H9.500V7.700" stroke="#1a7ad4" stroke-width="1.700" fill="none"/></svg>
<div class="dl" style="left:-6px;top:157px;letter-spacing:.5px">imribiy</div>
<div class="dl" style="left:-6px;top:173px;letter-spacing:.25px">Overclock...</div>
<svg style="left:23px;top:206px" width="32" height="42" viewBox="0 0 32 42"><path d="M0 0h23.500L32 8.500V42H0z" fill="#f4f4f4"/><path d="M23.500 0v8.500H32z" fill="#cfcfcf"/><path d="M3.500 4.5h19" stroke="#9a9a9a" stroke-width="1"/><path d="M3.500 7.5h19" stroke="#9a9a9a" stroke-width="1"/><path d="M3.500 10.5h25" stroke="#9a9a9a" stroke-width="1"/><path d="M3.500 13.5h25" stroke="#9a9a9a" stroke-width="1"/><path d="M3.500 16.5h25" stroke="#9a9a9a" stroke-width="1"/><path d="M3.500 19.5h25" stroke="#9a9a9a" stroke-width="1"/><path d="M3.500 22.5h25" stroke="#9a9a9a" stroke-width="1"/><path d="M3.500 25.5h25" stroke="#9a9a9a" stroke-width="1"/><path d="M3.500 28.5h25" stroke="#9a9a9a" stroke-width="1"/><path d="M3.500 31.5h25" stroke="#9a9a9a" stroke-width="1"/><path d="M3.500 34.5h25" stroke="#9a9a9a" stroke-width="1"/><path d="M3.500 37.5h25" stroke="#9a9a9a" stroke-width="1"/></svg>
<div class="dl" style="left:-6px;top:255px">欢迎来到</div>
<div class="dl" style="left:-6px;top:272px;letter-spacing:.3px">XOS.txt</div>
<svg style="left:18px;top:307px" width="43" height="34" viewBox="0 0 43 34"><path d="M2 0h12.500c1 0 1.800.4 2.500 1l3 3.500h20.500c1.100 0 2 .9 2 2V31c0 1.100-.9 2-2 2H2c-1.100 0-2-.9-2-2V2C0 .9.900 0 2 0z" fill="#f3b93a"/><path d="M1.500 6.500h39.500v14H1.500z" fill="#f2d28c"/><path d="M14 17c2-5 7-8 12-5 2 1 3.500 3 4.500 5z" fill="#f4f7f5"/><path d="M13 19c3-5 6-7.500 9.500-7.500" stroke="#7cc46a" stroke-width="1.600" fill="none"/><path d="M16 19c2.500-4 5-6 7.500-6s4 2 5.500 5" stroke="#3a8fd8" stroke-width="1.800" fill="none"/><path d="M0 20.500c0-1.100.9-2 2-2h39c1.100 0 2 .9 2 2V31c0 1.400-1.100 2.500-2.500 2.500h-38C1.100 33.500 0 32.400 0 31z" fill="#fbd567"/><path d="M0 30v1c0 1.400 1.100 2.500 2.500 2.500h38c1.400 0 2.500-1.100 2.500-2.500v-1z" fill="#f3bf45"/></svg>
<svg style="left:15px;top:336px" width="13" height="13" viewBox="0 0 13 13"><rect width="13" height="13" rx="1" fill="#f2f2f2"/><path d="M3.200 9.800L9 4M5.300 3.500H9.500V7.700" stroke="#1a7ad4" stroke-width="1.700" fill="none"/></svg>
<div class="dl" style="left:-6px;top:353px">XOS</div>
<div id="winborder"></div>
<div id="taskbar"></div>
<svg style="left:21px;top:733px" width="23" height="23" viewBox="0 0 23 23"><defs><linearGradient id="wl" x1="0" y1="0" x2="1" y2="1"><stop offset="0" stop-color="#6fdcff"/><stop offset="1" stop-color="#1f9bea"/></linearGradient></defs><path d="M0 0h11v11H0zM12 0h11v11H12zM0 12h11v11H0zM12 12h11v11H12z" fill="url(#wl)"/></svg>
<svg style="left:65px;top:732px" width="24" height="24" viewBox="0 0 24 24"><circle cx="10.800" cy="10.800" r="8.300" fill="#3a3a3a" stroke="#f2f2f2" stroke-width="2.600"/><path d="M17.200 17.200l5 5" stroke="#e8e8e8" stroke-width="2.800" stroke-linecap="round"/></svg>
<div style="left:101px;top:724px;width:40px;height:40px;background:#2b2b2b;border:1px solid #333;border-radius:5px"></div>
<svg style="left:109px;top:733px" width="24" height="22" viewBox="0 0 24 22"><path d="M1.500 0h7c.6 0 1.100.2 1.500.6L12 2.800h10.500c.8 0 1.500.7 1.500 1.500V7H0V1.500C0 .7.700 0 1.500 0z" fill="#e09b1e"/><path d="M0 5c0-.8.700-1.500 1.500-1.500h21c.8 0 1.500.7 1.500 1.500v15c0 .8-.7 1.500-1.500 1.500h-21C.7 21.500 0 20.800 0 20z" fill="#fbd35b"/><path d="M5 15.500c0-1 .8-1.800 1.800-1.800h10.400c1 0 1.800.8 1.800 1.800v6H5z" fill="#1b74cc"/><path d="M8 18.500h8v3H8z" fill="#5fc0f7"/></svg>
<div style="left:113px;top:760px;width:16px;height:3px;background:#4cc2ff;border-radius:1.500px"></div>
<svg style="left:153px;top:732px" width="23" height="24" viewBox="0 0 23 24"><path d="M6.500 7V4.200A2.600 2.600 0 0 1 9.100 1.600h4.800a2.600 2.600 0 0 1 2.600 2.600V7" stroke="#2e93dd" stroke-width="2" fill="none"/><path d="M0 5.500h23V21c0 1.700-1.300 3-3 3H3c-1.700 0-3-1.300-3-3z" fill="#f1f1f1"/><path d="M7 11h4v4H7z" fill="#f25022"/><path d="M12 11h4v4h-4z" fill="#7fba00"/><path d="M7 16h4v4H7z" fill="#00a4ef"/><path d="M12 16h4v4h-4z" fill="#ffb900"/></svg>
<svg style="left:787px;top:740px" width="11" height="6.500" viewBox="0 0 12 7"><path d="M.8 6.200L6 1l5.200 5.200" stroke="#fff" stroke-width="1.600" fill="none" stroke-linecap="round" stroke-linejoin="round"/></svg>
<div class="t" style="left:817px;top:734px;font-size:16px;line-height:20px;height:20px;font-weight:400">英</div>
<div class="t" style="left:855px;top:734px;font-size:16px;line-height:20px;height:20px;font-weight:400">拼</div>
<svg style="left:893px;top:736px" width="17" height="17" viewBox="0 0 17 17"><path d="M10.500 12.200H2.200A1.600 1.600 0 0 1 .6 10.600V2.400A1.600 1.600 0 0 1 2.200 .8h9.300" stroke="#fff" stroke-width="1.200" fill="none"/><path d="M3.500 15.500h9M6.500 12.400v3M14 9v6.500h-2" stroke="#fff" stroke-width="1.200" fill="none"/><rect x="12.400" y=".6" width="3.200" height="6" rx=".8" stroke="#fff" stroke-width="1.100" fill="none"/><path d="M14 6.600V9" stroke="#fff" stroke-width="1.200"/><path d="M14 2.200v1.600" stroke="#fff" stroke-width="1"/></svg>
<svg style="left:917px;top:738px" width="17" height="14" viewBox="0 0 17 14"><path d="M.6 4.600h2.600L6.800 1.200v11.600L3.200 9.400H.6z" stroke="#fff" stroke-width="1.100" fill="none" stroke-linejoin="round"/><path d="M9.200 4.500a3.500 3.500 0 0 1 0 5M11.500 2.600a6.200 6.200 0 0 1 0 8.800M13.800 .8a8.800 8.800 0 0 1 0 12.400" stroke="#fff" stroke-width="1.100" fill="none" stroke-linecap="round"/></svg>
<div class="t" style="left:904px;top:729px;width:101px;text-align:right;letter-spacing:-.25px">22:37</div>
<div class="t" style="left:904px;top:745px;width:101px;text-align:right;letter-spacing:.2px">2025/2/19</div>
</div>
</body>
</html>
